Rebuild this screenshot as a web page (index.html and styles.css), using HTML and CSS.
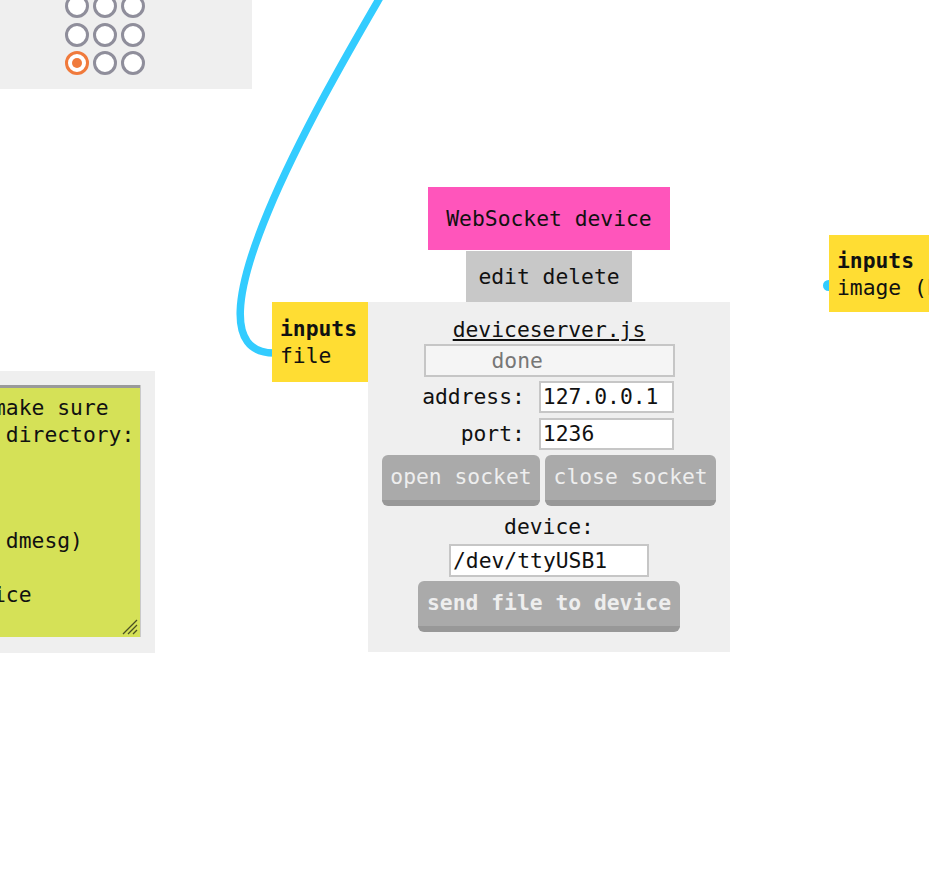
FILE: index.html
```html
<!DOCTYPE html>
<html lang="en">

<head>
  <meta charset="UTF-8">
  <meta name="viewport" content="width=device-width, initial-scale=1.0">
  <title>WebSocket device</title>
  <link rel="stylesheet" href="styles.css">
</head>

<body>
  <div id="canvas">
    <!-- wires -->
    <svg class="wires" width="929" height="889" viewBox="0 0 929 889">
      <path d="M 382 -6 C 335 75, 170 353, 274 353" />
    </svg>

    <!-- 3x3 picker -->
    <div class="picker">
      <div class="dots">
        <span class="dot"></span><span class="dot"></span><span class="dot"></span>
        <span class="dot"></span><span class="dot"></span><span class="dot"></span>
        <span class="dot on"></span><span class="dot"></span><span class="dot"></span>
      </div>
    </div>

    <!-- sticky note -->
    <div class="note-wrap">
      <div class="note">
        <pre>To send a file, you must make sure
run the server in its own directory:

  node deviceserver.js

then find the port (using dmesg)

and type it in as the device</pre>
        <svg class="grip" width="18" height="18" viewBox="0 0 18 18">
          <path d="M 3 17 L 17 3 M 8 17 L 17 8 M 13 17 L 17 13" />
        </svg>
      </div>
    </div>

    <!-- websocket node -->
    <div class="node ws">
      <div class="node-title">WebSocket device</div>
      <div class="node-tools">edit delete</div>
      <div class="node-body">
        <div class="ports">
          <b>inputs</b>
          <span>file</span>
        </div>
        <a class="file-link" href="javascript:;">deviceserver.js</a>
        <input class="status" type="text" value="done" readonly>
        <div class="fields">
          <label>address:</label>
          <input type="text" value="127.0.0.1">
          <label>port:</label>
          <input type="text" value="1236">
        </div>
        <div class="btn-row">
          <button class="btn">open socket</button>
          <button class="btn">close socket</button>
        </div>
        <div class="device-label">device:</div>
        <input class="device" type="text" value="/dev/ttyUSB1">
        <button class="btn send">send file to device</button>
      </div>
    </div>

    <!-- node on the right -->
    <div class="ports side">
      <span class="plug"></span>
      <b>inputs</b>
      <span>image (PNG)</span>
    </div>
  </div>
</body>

</html>
```

FILE: styles.css
```css
* {
  margin: 0;
  padding: 0;
  box-sizing: border-box;
}

body {
  background: #fff;
  font-family: "DejaVu Sans Mono", monospace;
  font-size: 16pt;
  line-height: 1.25;
  color: #111;
  overflow: hidden;
}

#canvas {
  position: relative;
  width: 929px;
  height: 889px;
  overflow: hidden;
}

.wires {
  position: absolute;
  left: 0;
  top: 0;
}

.wires path {
  fill: none;
  stroke: #33ccff;
  stroke-width: 7.5;
}

/* picker */
.picker {
  position: absolute;
  left: 0;
  top: -40px;
  width: 252px;
  height: 129px;
  background: #efefef;
  display: flex;
  align-items: flex-end;
  padding: 0 0 14px 65px;
}

.dots {
  display: grid;
  grid-template-columns: repeat(3, 24px);
  grid-auto-rows: 24px;
  gap: 4.5px 4px;
}

.dot {
  border: 3.5px solid #8f8e9b;
  border-radius: 50%;
  background: #fff;
  position: relative;
}

.dot.on {
  border-color: #f07a3c;
}

.dot.on::after {
  content: "";
  position: absolute;
  left: 3.5px;
  top: 3.5px;
  width: 10px;
  height: 10px;
  border-radius: 50%;
  background: #f07a3c;
}

/* sticky note */
.note-wrap {
  position: absolute;
  left: -351px;
  top: 371px;
  background: #efefef;
  padding: 14px 15px 16px 15px;
}

.note {
  position: relative;
  width: 476px;
  height: 252px;
  background: #d5e157;
  border-top: 3px solid #9a9a9a;
  box-shadow: 1px 0 0 #c9c9c9;
  padding: 7px 8px;
}

.note pre {
  font: inherit;
  line-height: 1.25;
}

.grip {
  position: absolute;
  right: 2px;
  bottom: 2px;
}

.grip path {
  stroke: #4a4f22;
  stroke-width: 1.3;
}

/* node */
.node {
  position: absolute;
  display: flex;
  flex-direction: column;
  align-items: center;
}

.ws {
  left: 368px;
  top: 187px;
  width: 362px;
}

.node-title {
  background: #ff55bb;
  padding: 19px 18px 17.5px;
}

.node-tools {
  background: #c8c8c8;
  padding: 13px 12px 11.5px;
  margin-top: 1px;
}

.node-body {
  position: relative;
  width: 362px;
  background: #efefef;
  display: flex;
  flex-direction: column;
  align-items: center;
  padding: 15px 0 20px;
}

.ports {
  position: absolute;
  right: 100%;
  top: 0;
  width: 96px;
  background: #ffdd33;
  padding: 14px 8px 12px;
  display: flex;
  flex-direction: column;
}

.ports.side {
  left: 829px;
  right: auto;
  top: 235px;
  width: 180px;
  padding: 13px 8px 11px;
  white-space: nowrap;
}

.plug {
  position: absolute;
  left: -6px;
  top: 45px;
  width: 11px;
  height: 11px;
  border-radius: 50%;
  background: #33ccff;
  z-index: -1;
}

.file-link {
  color: #111;
  text-decoration: underline;
}

input {
  font: inherit;
  color: #111;
  background: #fff;
  border: 2px solid #c6c6c6;
  padding: 0 2px;
  height: 33px;
  outline: none;
}

.status {
  width: 251px;
  background: #f5f5f5;
  color: #777;
  padding-left: 66px;
}

.fields {
  margin-top: 4px;
  display: grid;
  grid-template-columns: auto 135px;
  grid-auto-rows: 32px;
  column-gap: 14px;
  row-gap: 5px;
  align-items: center;
  margin-left: -2px;
}

.fields label {
  text-align: right;
}

.fields input {
  height: 32px;
}

.btn-row {
  margin-top: 5px;
  display: flex;
  gap: 5px;
}

.btn {
  font: inherit;
  color: #eee;
  background: #aaa;
  border: none;
  border-bottom: 6px solid #989898;
  border-radius: 6px;
  padding: 9px 8.5px 9.5px;
  cursor: pointer;
}

.device-label {
  margin-top: 8px;
}

.device {
  margin-top: 3px;
  width: 200px;
}

.send {
  margin-top: 4px;
  font-weight: bold;
  padding: 9.5px 9px 9px;
}
```
